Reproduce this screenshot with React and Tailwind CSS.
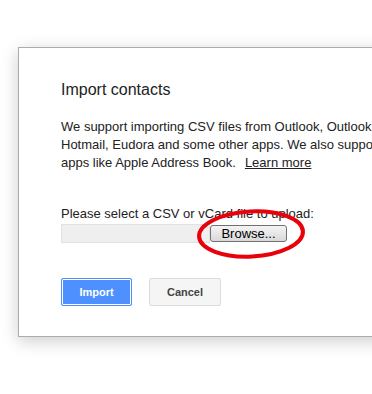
export default function App() {
  return (
    <div
      className="relative w-[372px] h-[394px] overflow-hidden bg-white pt-[47px] pl-[18px]"
      style={{ fontFamily: '"Liberation Sans", Arial, sans-serif' }}
    >
      {/* Dialog */}
      <div className="w-[600px] h-[290px] border border-[#acacac] bg-white shadow-[0_4px_16px_rgba(0,0,0,0.2)] pt-[32px] pl-[42px] text-[#222]">
        <h1 className="text-[16px] leading-[20px] font-normal">Import contacts</h1>

        <p className="mt-[18px] text-[13px] leading-[18px] whitespace-nowrap">
          We support importing CSV files from Outlook, Outlook Express, Yahoo! Mail,
          <br />
          Hotmail, Eudora and some other apps. We also support importing vCard from
          <br />
          apps like Apple Address Book.
          <a href="#" className="ml-[9px] underline text-[#222]">
            Learn more
          </a>
        </p>

        <p className="mt-[33px] text-[13px] leading-[18px]">
          Please select a CSV or vCard file to upload:
        </p>

        <div className="mt-[1px] flex items-center">
          <div className="w-[149px] h-[19px] bg-[#efefef] border border-[#e2e2e2]" />
          <button className="w-[77px] h-[17px] rounded-[3px] border border-[#707070] bg-gradient-to-b from-[#f4f4f4] to-[#d9d9d9] text-[13px] leading-[15px] text-black">
            Browse...
          </button>
        </div>

        {/* Actions */}
        <div className="mt-[35px] flex gap-[17px]">
          <button className="w-[71px] h-[28px] rounded-[2px] border border-[#4d90fe] bg-[#4d90fe] shadow-[inset_0_0_0_1px_#fff] text-white text-[11px] font-bold">
            Import
          </button>
          <button className="w-[72px] h-[28px] rounded-[2px] border border-[#dcdcdc] bg-[#f5f5f5] text-[#444] text-[11px] font-bold">
            Cancel
          </button>
        </div>
      </div>

      {/* Red annotation circle */}
      <svg
        className="absolute left-[194px] top-[206px]"
        width="114"
        height="56"
        viewBox="0 0 114 56"
      >
        <ellipse
          cx="57"
          cy="28"
          rx="52"
          ry="22.5"
          fill="none"
          stroke="#e8000b"
          strokeWidth="4"
          transform="rotate(-3 57 28)"
        />
      </svg>
    </div>
  );
}
